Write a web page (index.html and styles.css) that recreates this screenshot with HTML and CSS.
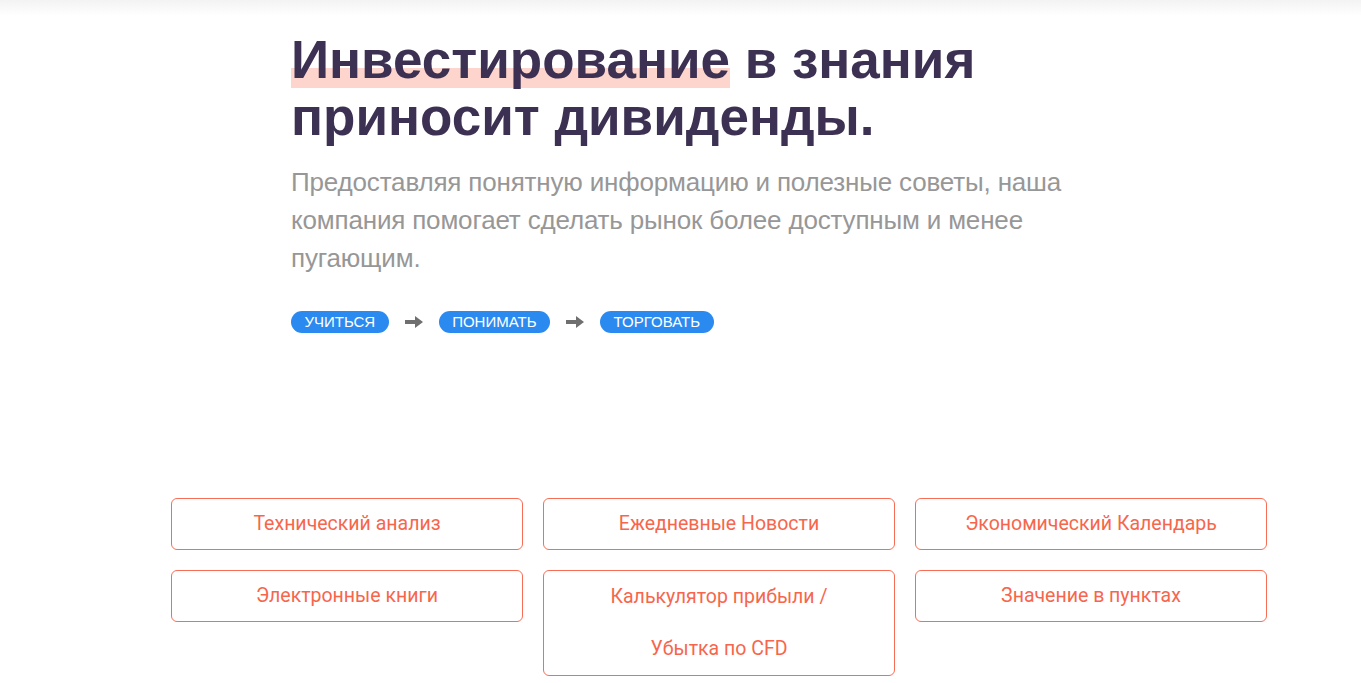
FILE: index.html
```html
<!DOCTYPE html>
<html lang="ru">
<head>
<meta charset="utf-8">
<link rel="stylesheet" href="styles.css">
</head>
<body>
<div class="topshade"></div>
<section class="hero">
  <h1 class="title"><span class="mark">Инвестирование</span> в знания приносит дивиденды.</h1>
  <p class="lead">Предоставляя понятную информацию и полезные советы, наша компания помогает сделать рынок более доступным и менее пугающим.</p>
  <div class="steps">
    <span class="pill">УЧИТЬСЯ</span>
    <svg class="arrow" viewBox="0 0 18 14" width="18" height="14"><path d="M0 5h10V1l8 6-8 6V9H0z" fill="#6f6f6f"/></svg>
    <span class="pill">ПОНИМАТЬ</span>
    <svg class="arrow" viewBox="0 0 18 14" width="18" height="14"><path d="M0 5h10V1l8 6-8 6V9H0z" fill="#6f6f6f"/></svg>
    <span class="pill">ТОРГОВАТЬ</span>
  </div>
</section>
<section class="tools">
  <a class="card">Технический анализ</a>
  <a class="card">Ежедневные Новости</a>
  <a class="card">Экономический Календарь</a>
  <a class="card">Электронные книги</a>
  <a class="card card-tall">Калькулятор прибыли /<br>Убытка по CFD</a>
  <a class="card">Значение в пунктах</a>
</section>
</body>
</html>
```
FILE: styles.css
```css
html, body {
  margin: 0;
  padding: 0;
  background: #fff;
}
body {
  font-family: Roboto, "Liberation Sans", sans-serif;
  position: relative;
}
.topshade {
  position: absolute;
  left: 0;
  right: 0;
  top: 0;
  height: 16px;
  background: linear-gradient(#f3f3f3, rgba(255,255,255,0));
}
.hero {
  padding: 31px 0 0 291px;
  width: 790px;
}
.title {
  margin: 0;
  font-family: "Liberation Sans", Arial, sans-serif;
  font-weight: 700;
  font-size: 53px;
  line-height: 57px;
  color: #3c3152;
  width: 720px;
}
.mark {
  background: linear-gradient(to bottom, transparent 64%, #fed5cd 64%, #fed5cd 98%, transparent 98%);
}
.lead {
  margin: 18px 0 0;
  font-family: "Liberation Sans", Arial, sans-serif;
  font-size: 26px;
  line-height: 38px;
  color: #979797;
  letter-spacing: -0.17px;
  width: 785px;
}
.steps {
  margin-top: 34px;
  display: flex;
  align-items: center;
  gap: 15px;
}
.pill {
  background: #2b8af0;
  color: #fff;
  font-family: "Liberation Sans", Arial, sans-serif;
  font-size: 15px;
  line-height: 22px;
  padding: 0 13.5px;
  border-radius: 11px;
}
.arrow {
  margin: 0 1px;
}
.tools {
  margin: 165px 0 0 171px;
  width: 1096px;
  display: grid;
  grid-template-columns: repeat(3, 1fr);
  gap: 20px;
  align-items: start;
}
.card {
  display: block;
  border: 1px solid #f76d55;
  border-radius: 6px;
  text-align: center;
  color: #f7664c;
  font-size: 19.5px;
  line-height: 50px;
  text-decoration: none;
}
.card-tall {
  line-height: 52px;
}
```
